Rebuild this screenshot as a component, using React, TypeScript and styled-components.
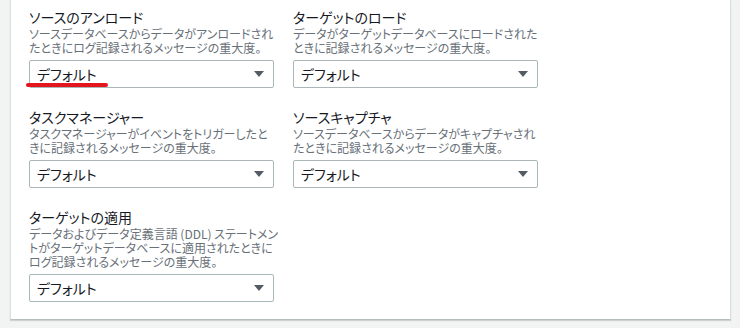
import React from "react";
import styled, { createGlobalStyle } from "styled-components";

const GlobalStyle = createGlobalStyle`
  html, body {
    margin: 0;
    padding: 0;
    background: #f2f3f3;
  }
  body {
    font-family: "Noto Sans CJK JP", "Noto Sans", "Liberation Sans", sans-serif;
    font-feature-settings: "palt";
    color: #16191f;
  }
`;

type Setting = {
  label: string;
  description: string[];
  value: string;
  marked?: boolean;
};

// description lines are split where the console wraps them
const settings: Setting[] = [
  {
    label: "ソースのアンロード",
    description: [
      "ソースデータベースからデータがアンロードされ",
      "たときにログ記録されるメッセージの重大度。",
    ],
    value: "デフォルト",
    marked: true,
  },
  {
    label: "ターゲットのロード",
    description: [
      "データがターゲットデータベースにロードされた",
      "ときに記録されるメッセージの重大度。",
    ],
    value: "デフォルト",
  },
  {
    label: "タスクマネージャー",
    description: [
      "タスクマネージャーがイベントをトリガーしたと",
      "きに記録されるメッセージの重大度。",
    ],
    value: "デフォルト",
  },
  {
    label: "ソースキャプチャ",
    description: [
      "ソースデータベースからデータがキャプチャされ",
      "たときに記録されるメッセージの重大度。",
    ],
    value: "デフォルト",
  },
  {
    label: "ターゲットの適用",
    description: [
      "データおよびデータ定義言語 (DDL) ステートメン",
      "トがターゲットデータベースに適用されたときに",
      "ログ記録されるメッセージの重大度。",
    ],
    value: "デフォルト",
  },
];

const App: React.FC = () => {
  return (
    <Page>
      <GlobalStyle />
      <Panel>
        <FieldGrid>
          {settings.map((s) => (
            <Field key={s.label}>
              <Label>{s.label}</Label>
              <Description>
                {s.description.map((line) => (
                  <DescLine key={line}>{line}</DescLine>
                ))}
              </Description>
              <SelectBox>
                <SelectValue>{s.value}</SelectValue>
                <Caret width="10" height="6" viewBox="0 0 10 6">
                  <path d="M0 0 H10 L5 6 Z" fill="#545b64" />
                </Caret>
              </SelectBox>
              {s.marked && <Mark />}
            </Field>
          ))}
        </FieldGrid>
      </Panel>
    </Page>
  );
};

const Page = styled.div`
  padding: 0 9px 8px 10px;
`;

const Panel = styled.div`
  background: #ffffff;
  border: 1px solid #d9dede;
  border-top: none;
  border-bottom-color: #b6bec0;
  box-shadow: 0 1px 1px 0 rgba(0, 28, 36, 0.15);
  padding: 7px 18px 17px 18px;
`;

const FieldGrid = styled.div`
  display: grid;
  grid-template-columns: 245px 245px;
  column-gap: 19px;
  row-gap: 19px;
  align-items: start;
`;

const Field = styled.div`
  position: relative;
  display: flex;
  flex-direction: column;
`;

const Label = styled.div`
  font-size: 14px;
  line-height: 20px;
  color: #16191f;
`;

const Description = styled.div`
  display: flex;
  flex-direction: column;
  font-size: 12px;
  color: #687078;
  margin-bottom: 5px;
`;

const DescLine = styled.span`
  display: block;
  height: 14px;
  line-height: 14px;
  white-space: nowrap;
`;

const SelectBox = styled.div`
  height: 28px;
  box-sizing: border-box;
  border: 1px solid #aab7b8;
  border-radius: 2px;
  display: flex;
  align-items: center;
  justify-content: space-between;
  padding: 0 9px 0 7px;
`;

const SelectValue = styled.span`
  font-size: 14px;
  color: #16191f;
`;

const Caret = styled.svg`
  display: block;
`;

const Mark = styled.div`
  position: absolute;
  left: -3px;
  bottom: 1px;
  width: 82px;
  height: 4px;
  border-radius: 2px;
  background: #e3151d;
`;

export default App;
